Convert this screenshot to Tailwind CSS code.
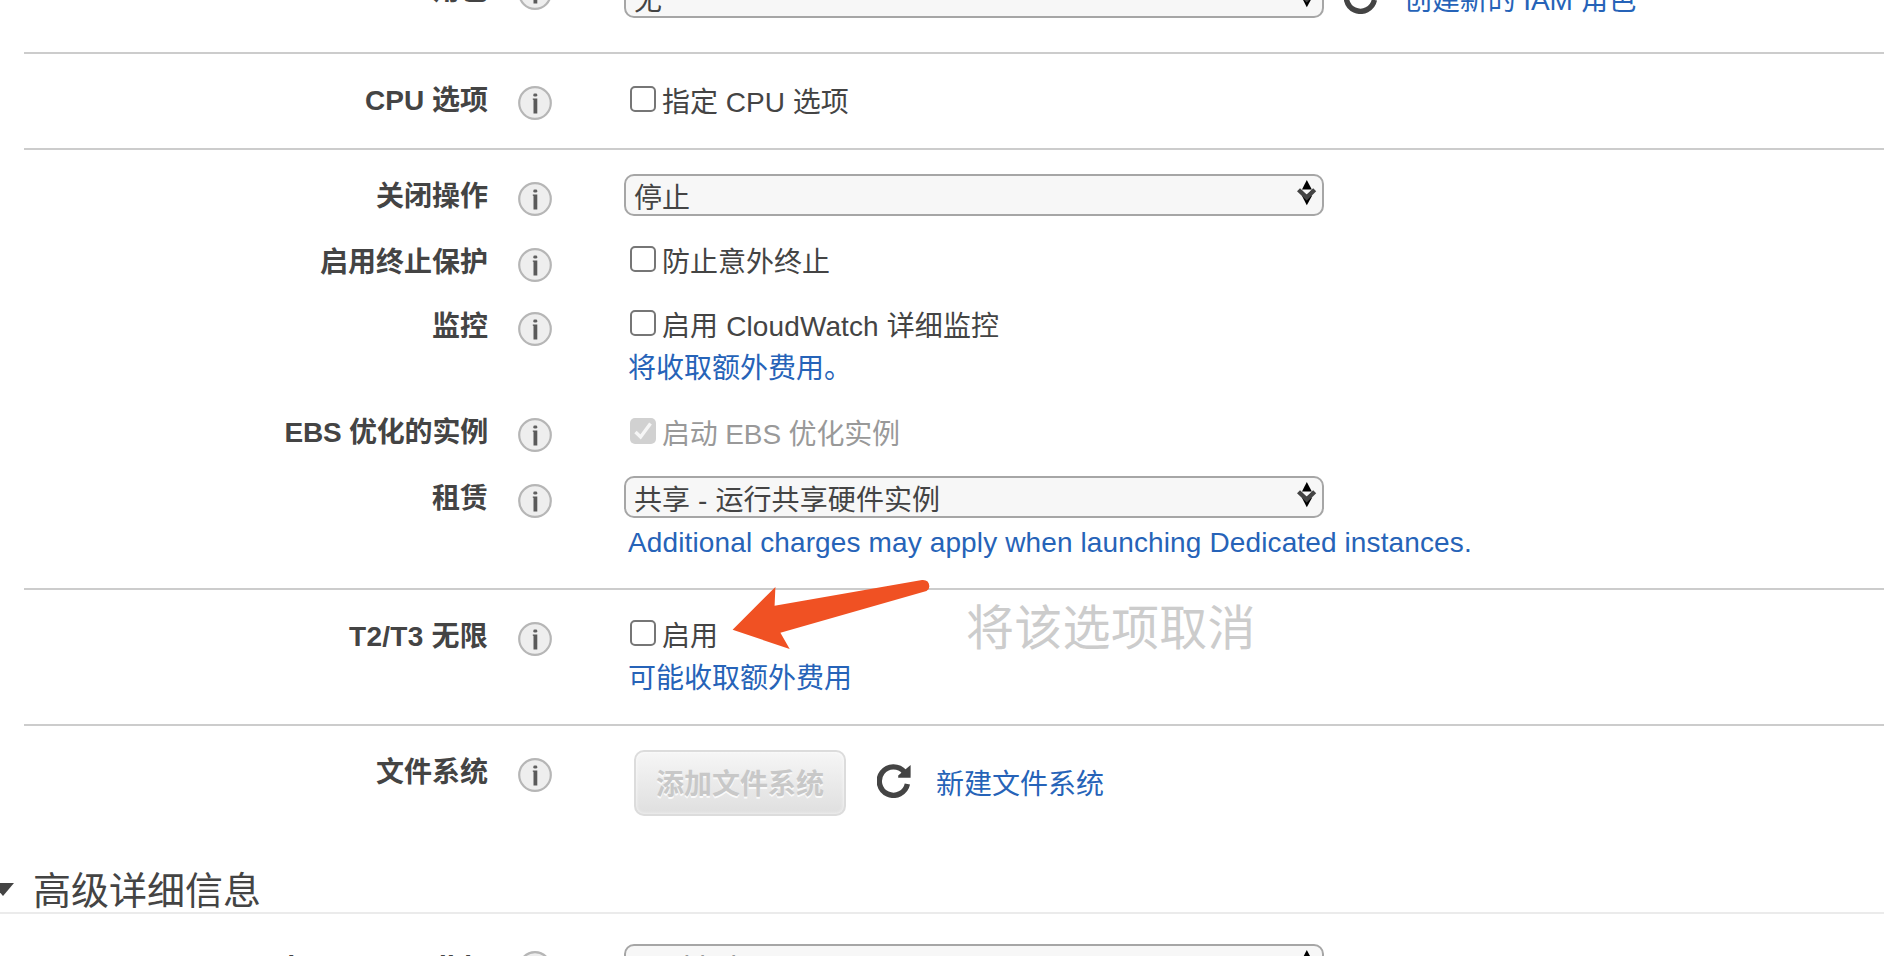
<!DOCTYPE html>
<html lang="zh-CN">
<head>
<meta charset="utf-8">
<title>配置实例详细信息</title>
<script src="https://cdn.jsdelivr.net/npm/@tailwindcss/browser@4"></script>
</head>
<body class="bg-white">
<svg class="hidden">
  <symbol id="info" viewBox="0 0 34 34">
    <circle cx="17" cy="17" r="15.8" fill="#eeeeee" stroke="#b6b6b6" stroke-width="2.2"/>
    <rect x="15.3" y="7.6" width="4" height="3" rx="1.4" fill="#606060"/>
    <path d="M14.8 12.6H19.3V27.6H15.5V13.8H14.8Z" fill="#5a5a5a"/>
  </symbol>
  <symbol id="refresh" viewBox="0 0 34 34">
    <path d="M27.4 8A14.2 14.2 0 1 0 30.4 20" fill="none" stroke="#444" stroke-width="5.4"/>
    <path d="M33.6 1V13.7H21.2V11.5Z" fill="#444"/>
  </symbol>
  <symbol id="updown" viewBox="0 0 20 26">
    <path d="M9.8 0L14.8 9.4H5Z" fill="#000"/>
    <path d="M4.8 15.5L9.8 25.2L15.2 15.5Z" fill="#000"/>
    <path d="M0 11.2L3 8.3L9.6 14.2L16.2 8.3L19.2 11.2L9.7 20.4Z" fill="#444"/>
    <path d="M5.8 10.3H13.6L9.6 14.2Z" fill="#f7f7f7"/>
  </symbol>
</svg>
<div class="relative flex h-[956px] w-[1884px] flex-col overflow-hidden bg-white text-[28px] leading-[42px] text-[#444] font-['Liberation_Sans','Noto_Sans_CJK_SC',sans-serif]">
  <section class="-mt-[30px] ml-6 flex h-[82px] shrink-0 items-start">
    <div class="w-[464px] text-right font-bold">IAM 角色</div>
    <svg class="mt-1.5 ml-[30px] size-[34px]"><use href="#info"/></svg>
    <div class="mt-1.5 ml-[72px] flex h-[42px] w-[700px] items-start justify-between rounded-[10px] border-2 border-[#a6a6a6] bg-[#f7f7f7] pl-2 pr-[5px]"><span class="mt-0.5">无</span><svg class="mt-1 h-[26px] w-5"><use href="#updown"/></svg></div>
    <svg class="mt-[10px] ml-[20px] size-[34px]"><use href="#refresh"/></svg>
    <a class="mt-[10px] ml-[26px] tracking-[-0.1px] text-[#2663b8]">创建新的 IAM 角色</a>
  </section>

  <section class="ml-6 flex h-24 shrink-0 items-start border-t-2 border-[#ccc]">
    <div class="mt-[26px] w-[464px] text-right font-bold">CPU 选项</div>
    <svg class="mt-8 ml-[30px] size-[34px]"><use href="#info"/></svg>
    <span class="mt-8 ml-[78px] size-[26px] rounded-[5px] border-2 border-[#767676] bg-white"></span>
    <span class="mt-7 ml-1.5">指定 CPU 选项</span>
  </section>

  <section class="ml-6 h-[440px] shrink-0 border-t-2 border-[#ccc] pt-6">
    <div class="flex h-[66px] items-start">
      <div class="mt-0.5 w-[464px] text-right font-bold">关闭操作</div>
      <svg class="mt-2 ml-[30px] size-[34px]"><use href="#info"/></svg>
      <div class="ml-[72px] flex h-[42px] w-[700px] items-start justify-between rounded-[10px] border-2 border-[#a6a6a6] bg-[#f7f7f7] pl-2 pr-[5px]"><span class="mt-0.5">停止</span><svg class="mt-1 h-[26px] w-5"><use href="#updown"/></svg></div>
    </div>
    <div class="flex h-16 items-start">
      <div class="mt-0.5 w-[464px] text-right font-bold">启用终止保护</div>
      <svg class="mt-2 ml-[30px] size-[34px]"><use href="#info"/></svg>
      <span class="mt-1.5 ml-[78px] size-[26px] rounded-[5px] border-2 border-[#767676] bg-white"></span>
      <span class="mt-0.5 ml-1.5">防止意外终止</span>
    </div>
    <div class="flex h-[106px] items-start">
      <div class="mt-0.5 w-[464px] text-right font-bold">监控</div>
      <svg class="mt-2 ml-[30px] size-[34px]"><use href="#info"/></svg>
      <div class="ml-[76px] flex flex-col">
        <div class="flex items-start">
          <span class="mt-1.5 ml-0.5 size-[26px] rounded-[5px] border-2 border-[#767676] bg-white"></span>
          <span class="mt-0.5 ml-1.5 tracking-[0.12px]">启用 CloudWatch 详细监控</span>
        </div>
        <a class="text-[#2663b8]">将收取额外费用。</a>
      </div>
    </div>
    <div class="flex h-[66px] items-start">
      <div class="mt-0.5 w-[464px] text-right font-bold tracking-[-0.2px]">EBS 优化的实例</div>
      <svg class="mt-2 ml-[30px] size-[34px]"><use href="#info"/></svg>
      <span class="mt-2 ml-[78px] size-[26px] rounded-[5px] bg-[#d1d1d1]"><svg class="size-[26px]" viewBox="0 0 26 26"><path d="M5.5 14L10.6 19L20.5 5.5" fill="none" stroke="#f6f6f6" stroke-width="3.4"/></svg></span>
      <span class="mt-1 ml-1.5 tracking-[-0.15px] text-[#999]">启动 EBS 优化实例</span>
    </div>
    <div class="flex items-start">
      <div class="mt-0.5 w-[464px] text-right font-bold">租赁</div>
      <svg class="mt-2 ml-[30px] size-[34px]"><use href="#info"/></svg>
      <div class="ml-[72px] flex flex-col">
        <div class="flex h-[42px] w-[700px] items-start justify-between rounded-[10px] border-2 border-[#a6a6a6] bg-[#f7f7f7] pl-2 pr-[5px]"><span class="mt-0.5 tracking-[0.1px]">共享 - 运行共享硬件实例</span><svg class="mt-1 h-[26px] w-5"><use href="#updown"/></svg></div>
        <a class="mt-1 ml-1 whitespace-nowrap tracking-[0.125px] text-[#2663b8]">Additional charges may apply when launching Dedicated instances.</a>
      </div>
    </div>
  </section>

  <section class="ml-6 flex h-[136px] shrink-0 items-start border-t-2 border-[#ccc]">
    <div class="mt-[26px] w-[464px] text-right font-bold tracking-[0.25px]">T2/T3 无限</div>
    <svg class="mt-8 ml-[30px] size-[34px]"><use href="#info"/></svg>
    <div class="ml-[76px] flex flex-col">
      <div class="flex items-start">
        <span class="mt-[30px] ml-0.5 size-[26px] rounded-[5px] border-2 border-[#767676] bg-white"></span>
        <span class="mt-[26px] ml-1.5">启用</span>
      </div>
      <a class="text-[#2663b8]">可能收取额外费用</a>
    </div>
    <div class="mt-[9px] ml-[114px] text-[48px] leading-[60px] tracking-[0.3px] text-[#ccc]">将该选项取消</div>
  </section>

  <section class="ml-6 flex h-[136px] shrink-0 items-start border-t-2 border-[#ccc]">
    <div class="mt-[26px] w-[464px] text-right font-bold">文件系统</div>
    <svg class="mt-8 ml-[30px] size-[34px]"><use href="#info"/></svg>
    <div class="mt-6 ml-[82px] flex h-[66px] w-[212px] justify-center rounded-[10px] border-2 border-[#dcdcdc] bg-linear-to-b from-[#f6f6f6] to-[#dfdfdf] pt-3 font-bold text-[#c8c8c8] shadow-[inset_0_0_3px_1px_rgba(255,255,255,0.5)] [text-shadow:0_2px_0_#fafafa]">添加文件系统</div>
    <svg class="mt-[38px] ml-[31px] size-[34px]"><use href="#refresh"/></svg>
    <a class="mt-[38px] ml-[25px] text-[#2663b8]">新建文件系统</a>
  </section>

  <h2 class="flex h-[54px] shrink-0 items-start border-b-2 border-[#ebebeb]">
    <svg class="mt-[23px] -ml-2 h-[13px] w-[22px]" viewBox="0 0 22 13"><path d="M0 0H22L11 13Z" fill="#444"/></svg>
    <span class="mt-px ml-[19px] text-[38px] leading-[60px]">高级详细信息</span>
  </h2>

  <section class="ml-6 flex shrink-0 items-start">
    <div class="mt-[31px] w-[464px] text-right font-bold tracking-[0.2px]">Metadata accessible</div>
    <svg class="mt-[37px] ml-[30px] size-[34px]"><use href="#info"/></svg>
    <div class="mt-[30px] ml-[72px] flex h-[42px] w-[700px] items-start justify-between rounded-[10px] border-2 border-[#a6a6a6] bg-[#f7f7f7] pl-2 pr-[5px]"><span class="-mt-px text-[#999]">Enabled</span><svg class="mt-1 h-[26px] w-5"><use href="#updown"/></svg></div>
  </section>

  <svg class="absolute top-[578px] left-[730px] h-[74px] w-[202px]" viewBox="730 578 202 74">
    <path d="M732.6 629.7L775.4 587L774.6 605.7L922 580Q929 579.5 929.3 586Q929.5 589.5 926.5 591L780.4 632.7L789.7 649Z" fill="#f05123"/>
  </svg>
</div>
</body>
</html>
